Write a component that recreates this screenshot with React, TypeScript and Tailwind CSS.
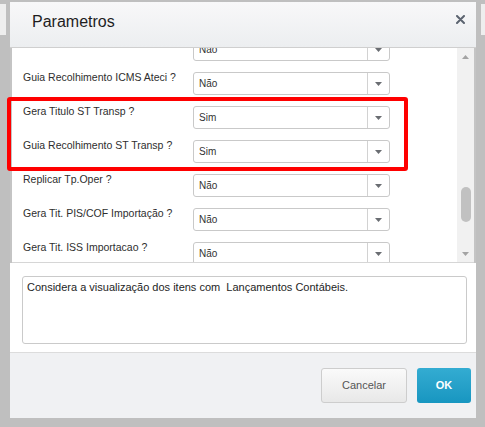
import type { ReactNode } from 'react'

type Param = { label: string; value: string }

const params: Param[] = [
  { label: 'Gera Guia ICMS Ateci ?', value: 'Não' },
  { label: 'Guia Recolhimento ICMS Ateci ?', value: 'Não' },
  { label: 'Gera Titulo ST Transp ?', value: 'Sim' },
  { label: 'Guia Recolhimento ST Transp ?', value: 'Sim' },
  { label: 'Replicar Tp.Oper ?', value: 'Não' },
  { label: 'Gera Tit. PIS/COF Importação ?', value: 'Não' },
  { label: 'Gera Tit. ISS Importacao ?', value: 'Não' },
  { label: 'Gera Guia ISS Importacao ?', value: 'Não' },
]

function Triangle({ up = false, color }: { up?: boolean; color: string }) {
  return (
    <svg width="7" height="4" viewBox="0 0 7 4" aria-hidden="true">
      <path d={up ? 'M0 4 L3.5 0 L7 4 Z' : 'M0 0 L7 0 L3.5 4 Z'} fill={color} />
    </svg>
  )
}

function Select({ value }: { value: string }) {
  return (
    <div className="flex h-[23px] w-[197px] shrink-0 rounded-[3px] border border-[#c9c9c9] bg-white">
      <span className="flex flex-1 items-center pl-[5px] text-[10px] text-[#333]">{value}</span>
      <span className="flex w-[22px] items-center justify-center border-l border-[#d2d2d2]">
        <Triangle color="#6a6d72" />
      </span>
    </div>
  )
}

function Button({ primary, children }: { primary?: boolean; children: ReactNode }) {
  return primary ? (
    <button
      type="button"
      className="h-[35px] w-[54px] rounded-[3px] bg-gradient-to-b from-[#33acd2] to-[#1796c0] text-[11px] font-bold text-white"
    >
      {children}
    </button>
  ) : (
    <button
      type="button"
      className="h-[35px] w-[86px] rounded-[3px] border border-[#cdcdcd] bg-gradient-to-b from-[#fafafa] to-[#e8e8e8] text-[11px] text-[#555]"
    >
      {children}
    </button>
  )
}

export default function App() {
  return (
    <div className="relative h-[427px] w-[485px] overflow-hidden bg-[#bfbfbf] font-['Liberation_Sans',Arial,sans-serif]">
      {/* page header strip behind the modal */}
      <div className="mt-[4px] h-[31px] bg-[#eeeeee]" />

      <div className="absolute left-[6px] top-0 flex h-[422px] w-[475px] flex-col border-b-4 border-l-4 border-r-[5px] border-t-2 border-[#bfbfbf] bg-white">
        <div className="flex h-[46px] shrink-0 items-start justify-between border-b border-[#cfcfcf] bg-gradient-to-b from-[#f8f8f9] to-[#eceef0] pl-[22px] pr-[11px] pt-[10px]">
          <span className="text-[16px] leading-[20px] text-[#1e1e1e]">Parametros</span>
          <svg className="mt-[3px]" width="9" height="9" viewBox="0 0 9 9" aria-hidden="true">
            <path d="M1 1 L8 8 M8 1 L1 8" stroke="#5c6470" strokeWidth="2" strokeLinecap="round" />
          </svg>
        </div>

        <div className="flex h-[215px] shrink-0 bg-[#c4c4c4] px-[2px]">
          <div className="flex flex-1 border-b border-[#d6d6d6] bg-white">
            <div className="flex-1 overflow-hidden">
              <div className="-mt-[16px]">
                {params.map((p) => (
                  <div key={p.label} className="flex h-[34px] items-start pl-[11px]">
                    <span className="mt-[4px] w-[170px] shrink-0 text-[10.5px] leading-[14px] text-[#2e2e2e]">
                      {p.label}
                    </span>
                    <div className="mt-[6px]">
                      <Select value={p.value} />
                    </div>
                  </div>
                ))}
              </div>
            </div>
            <div className="flex w-[17px] flex-col bg-[#f1f1f1]">
              <div className="flex h-[17px] items-center justify-center">
                <Triangle up color="#a3a3a3" />
              </div>
              <div className="flex-1">
                <div className="ml-[4px] mt-[122px] h-[35px] w-[10px] rounded-[5px] bg-[#c1c1c1]" />
              </div>
              <div className="flex h-[17px] items-center justify-center">
                <Triangle color="#a3a3a3" />
              </div>
            </div>
          </div>
        </div>

        <div className="flex-1 pb-[8px] pl-[12px] pr-[9px] pt-[13px]">
          <div className="h-[68px] whitespace-pre-wrap rounded-[3px] border border-[#cacaca] pl-[4px] pt-[3px] text-[11px] leading-[14px] text-[#1e1e1e]">
            {'Considera a visualização dos itens com  Lançamentos Contábeis.'}
          </div>
        </div>

        <div className="flex h-[66px] shrink-0 items-start justify-end gap-[10px] border-t border-[#dcdcdc] bg-[#f0f1f3] pr-[5px] pt-[15px]">
          <Button>Cancelar</Button>
          <Button primary>OK</Button>
        </div>

        {/* highlight annotation */}
        <div className="absolute left-[-3px] top-[95px] h-[74px] w-[401px] rounded-[3px] border-4 border-[#ff0000]" />
      </div>
    </div>
  )
}
